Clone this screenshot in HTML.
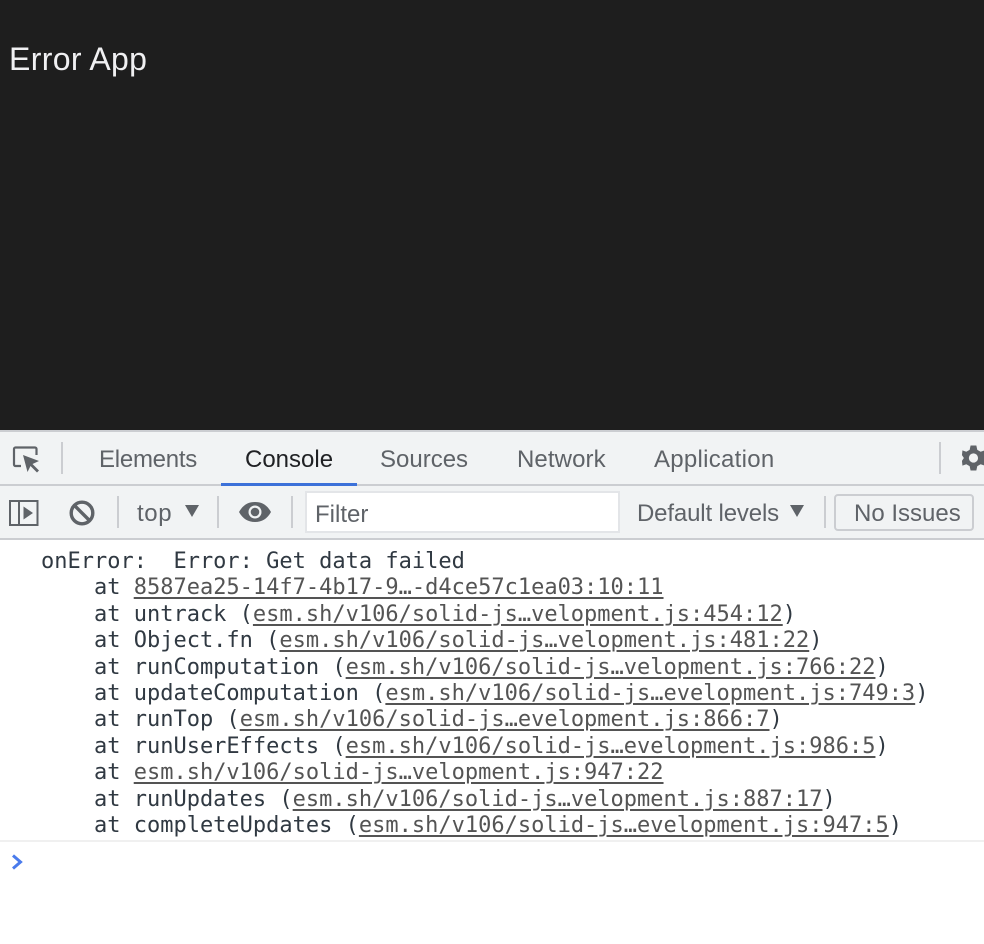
<!DOCTYPE html>
<html><head><meta charset="utf-8"><style>
html,body{margin:0;padding:0;width:984px;height:944px;overflow:hidden;background:#fff}
.a{position:absolute;white-space:pre}
.s{font-family:"Liberation Sans",sans-serif;font-size:24px;color:#5f6368;line-height:28px}
.r{position:absolute;background:#cbcdd1}
#log{position:absolute;left:41px;top:549px;font-family:"DejaVu Sans Mono",monospace;font-size:22px;line-height:26.4px;color:#303942;white-space:pre}
#log u{color:#545454;text-decoration-thickness:2px;text-underline-offset:3px}
</style></head><body>
<div class="a" style="left:0;top:0;width:984px;height:431px;background:#1e1e1e"></div>
<div class="a" style="left:9px;top:40px;font:32px/38px 'Liberation Sans',sans-serif;color:#f0f0f2;letter-spacing:.35px">Error App</div>
<div class="a" style="left:0;top:431px;width:984px;height:109px;background:#f1f3f4"></div>
<div class="r" style="left:0;top:430px;width:984px;height:2px"></div>
<div class="r" style="left:0;top:484px;width:984px;height:2px"></div>
<div class="r" style="left:0;top:538px;width:984px;height:2px"></div>
<div class="r" style="left:61px;top:442px;width:2px;height:32px"></div>
<div class="r" style="left:939px;top:442px;width:2px;height:32px"></div>
<svg class="a" style="left:12px;top:445px" width="30" height="30" viewBox="0 0 30 30"><path d="M9 21H3.5a1.5 1.5 0 0 1-1.500-1.500V4A1.500 1.500 0 0 1 3.500 2.500H23A1.500 1.500 0 0 1 24.500 4V10" fill="none" stroke="#5f6368" stroke-width="2.200"/><path d="M11 10L27 16L20.500 19L27 25.500L25 27.500L18.500 21L15.500 27Z" fill="#5f6368"/></svg>
<div class="a s" style="left:99px;top:446px;letter-spacing:-.25px">Elements</div>
<div class="a s" style="left:245px;top:446px;color:#202124">Console</div>
<div class="a" style="left:221px;top:483px;width:136px;height:3px;background:#3c71d9"></div>
<div class="a s" style="left:380px;top:446px">Sources</div>
<div class="a s" style="left:517px;top:446px;letter-spacing:.1px">Network</div>
<div class="a s" style="left:654px;top:446px;letter-spacing:.28px">Application</div>
<svg class="a" style="left:961px;top:443px" width="23" height="30" viewBox="0 0 24 30"><path d="M10 2H16L17 6.500L20.500 8.500L25 7L28 12L24.500 15L28 18L25 23L20.500 21.500L17 23.500L16 28H10L9 23.500L5.500 21.500L1.500 23L1 18L3 15L1 12L1.500 7L5.500 8.500L9 6.500Z" fill="#5f6368"/><circle cx="13" cy="15" r="4.800" fill="#f1f3f4"/></svg>
<svg class="a" style="left:9px;top:499px" width="30" height="28" viewBox="0 0 30 28"><rect x="1" y="2" width="27.500" height="24" fill="none" stroke="#5f6368" stroke-width="2"/><path d="M10 2V26" stroke="#5f6368" stroke-width="2"/><path d="M14.500 7.500L24 14L14.500 20.500Z" fill="#5f6368"/></svg>
<svg class="a" style="left:68px;top:499px" width="28" height="28" viewBox="0 0 28 28"><circle cx="14" cy="14" r="10.800" fill="none" stroke="#5f6368" stroke-width="3.400"/><path d="M6.500 6.500L21.500 21.500" stroke="#5f6368" stroke-width="3.400"/></svg>
<div class="r" style="left:117px;top:496px;width:2px;height:32px"></div>
<div class="a s" style="left:137px;top:500px;letter-spacing:.6px">top</div>
<svg class="a" style="left:184px;top:504px" width="16" height="14"><path d="M1 1H15L8 13Z" fill="#5f6368"/></svg>
<div class="r" style="left:217px;top:496px;width:2px;height:32px"></div>
<svg class="a" style="left:238px;top:500px" width="34" height="24" viewBox="0 0 34 24"><path d="M1 12C5 5 10 2 17 2S29 5 33 12C29 19 24 22 17 22S5 19 1 12Z" fill="#5f6368"/><circle cx="17" cy="12" r="6.500" fill="#f1f3f4"/><circle cx="17" cy="12" r="4.300" fill="#5f6368"/></svg>
<div class="r" style="left:291px;top:496px;width:2px;height:32px"></div>
<div class="a" style="left:305px;top:491px;width:311px;height:38px;background:#fff;border:2px solid #e3e5e8"></div>
<div class="a s" style="left:315px;top:501px">Filter</div>
<div class="a s" style="left:637px;top:500px;letter-spacing:-.15px">Default levels</div>
<svg class="a" style="left:789px;top:504px" width="16" height="14"><path d="M1 1H15L8 13Z" fill="#5f6368"/></svg>
<div class="r" style="left:824px;top:496px;width:2px;height:32px"></div>
<div class="a" style="left:834px;top:494px;width:136px;height:33px;border:2px solid #cbcdd1;border-radius:4px"></div>
<div class="a s" style="left:854px;top:500px">No Issues</div>
<div id="log">onError:  Error: Get data failed
    at <u>8587ea25-14f7-4b17-9…-d4ce57c1ea03:10:11</u>
    at untrack (<u>esm.sh/v106/solid-js…velopment.js:454:12</u>)
    at Object.fn (<u>esm.sh/v106/solid-js…velopment.js:481:22</u>)
    at runComputation (<u>esm.sh/v106/solid-js…velopment.js:766:22</u>)
    at updateComputation (<u>esm.sh/v106/solid-js…evelopment.js:749:3</u>)
    at runTop (<u>esm.sh/v106/solid-js…evelopment.js:866:7</u>)
    at runUserEffects (<u>esm.sh/v106/solid-js…evelopment.js:986:5</u>)
    at <u>esm.sh/v106/solid-js…velopment.js:947:22</u>
    at runUpdates (<u>esm.sh/v106/solid-js…velopment.js:887:17</u>)
    at completeUpdates (<u>esm.sh/v106/solid-js…evelopment.js:947:5</u>)</div>
<div class="a" style="left:0;top:840px;width:984px;height:2px;background:#f0f0f0"></div>
<svg class="a" style="left:10px;top:853px" width="16" height="18" viewBox="0 0 16 18"><path d="M3 2.500L10.500 9L3 15.500" fill="none" stroke="#4a7bec" stroke-width="3"/></svg>
</body></html>
